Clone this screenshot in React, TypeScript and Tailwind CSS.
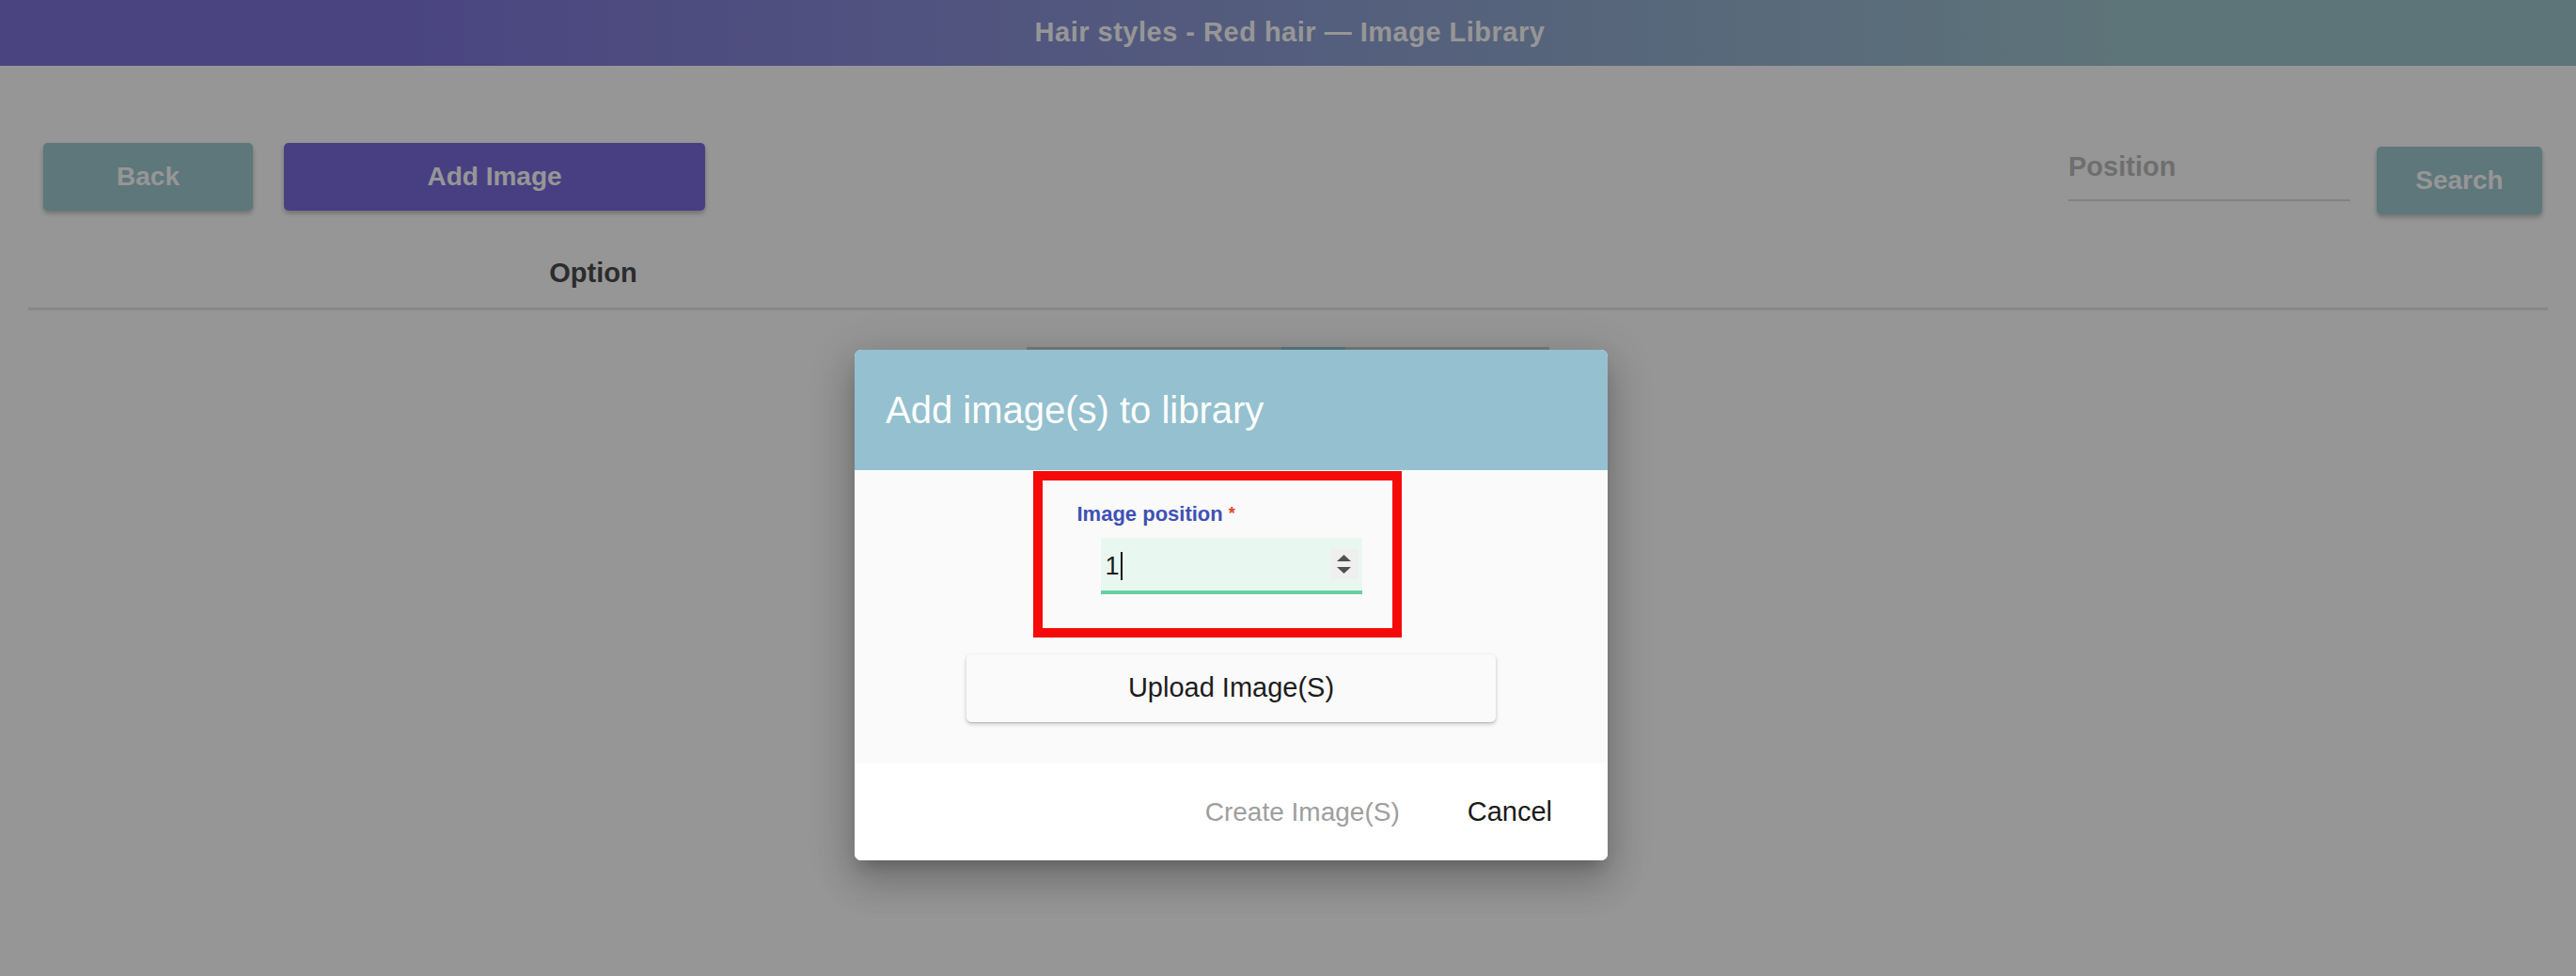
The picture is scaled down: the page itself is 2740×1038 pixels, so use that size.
import React from "react";

function Spinner() {
  return (
    <div className="flex h-[32px] w-[30px] flex-col items-center justify-center gap-[6px] bg-[#efefef]">
      <svg width="15" height="7" viewBox="0 0 15 7">
        <polygon points="7.5,0 15,7 0,7" fill="#505050" />
      </svg>
      <svg width="15" height="7" viewBox="0 0 15 7">
        <polygon points="0,0 15,0 7.5,7" fill="#505050" />
      </svg>
    </div>
  );
}

export default function App() {
  return (
    <div className="relative h-[1038px] w-full overflow-hidden bg-white font-['Liberation_Sans',Arial,sans-serif]">
      {/* Page */}
      <header className="flex h-[70px] items-center justify-center bg-[linear-gradient(90deg,#7f75dc_15%,#9fc8cd_85%)]">
        <h1 className="pl-[4px] text-[29px] font-bold tracking-[0.5px] text-white">
          Hair styles - Red hair — Image Library
        </h1>
      </header>

      <div className="flex items-start justify-between pl-[46px] pr-[36px] pt-[82px]">
        <div className="flex gap-[33px]">
          <button className="h-[72px] w-[223px] rounded-[5px] bg-[#9fcad2] text-[28px] font-bold text-white shadow-[0_3px_5px_rgba(0,0,0,0.25)]">
            Back
          </button>
          <button className="h-[72px] w-[448px] rounded-[5px] bg-[#7a6bde] text-[28px] font-bold text-white shadow-[0_3px_5px_rgba(0,0,0,0.25)]">
            Add Image
          </button>
        </div>
        <div className="flex items-start gap-[28px]">
          <div className="flex w-[300px] flex-col pt-[4px]">
            <span className="h-[42px] text-[29px] font-bold leading-[42px] text-[#bcbcbc]">Position</span>
            <div className="mt-[14px] h-[2px] bg-[#dedede]" />
          </div>
          <button className="mt-[4px] h-[72px] w-[176px] rounded-[5px] bg-[#9fcad2] text-[28px] font-bold text-white shadow-[0_3px_5px_rgba(0,0,0,0.25)]">
            Search
          </button>
        </div>
      </div>

      <div className="mx-[30px] mt-[45px]">
        <div className="flex h-[54px] items-start">
          <div className="w-[1202px] text-center text-[29px] font-bold leading-[34px] text-[#4b4b4b]">Option</div>
        </div>
        <div className="h-[3px] bg-[#e6e6e6]" />
        <div className="mt-[39px] flex justify-center">
          <div className="flex h-[10px] w-[556px] bg-[#d0d0d0]">
            <div className="ml-[271px] w-[68px] bg-[#98cbd9]" />
          </div>
        </div>
      </div>

      {/* Backdrop */}
      <div className="absolute inset-0 bg-black/[0.41]" />

      {/* Dialog */}
      <div className="absolute left-[909px] top-[372px] flex w-[801px] flex-col overflow-hidden rounded-[7px] bg-white shadow-[0_11px_15px_-7px_rgba(0,0,0,0.2),0_24px_38px_3px_rgba(0,0,0,0.14),0_9px_46px_8px_rgba(0,0,0,0.12)]">
        <div className="flex h-[128px] items-center bg-[#94c0cf] pl-[33px]">
          <h2 className="text-[40px] font-normal text-white">Add image(s) to library</h2>
        </div>
        <div className="flex h-[312px] flex-col items-center bg-[#fafafa]">
          <div className="flex w-[278px] flex-col pt-[33px]">
            <label className="ml-[-25px] flex h-[26px] items-center text-[22px] font-bold text-[#3f51b5]">
              Image position
              <span className="ml-[6px] self-start text-[18px] text-[#d84a2b]">*</span>
            </label>
            <div className="mt-[13px] flex h-[60px] items-center justify-between border-b-[4px] border-[#68d0a0] bg-[#e8f8f1] pl-[5px] pr-[4px]">
              <span className="flex items-center pt-[4px] text-[27px] text-[#1a1a1a]">
                1<span className="ml-[1px] inline-block h-[30px] w-[2px] bg-[#111]" />
              </span>
              <Spinner />
            </div>
          </div>
          <button className="mt-[64px] h-[72px] w-[563px] rounded-[5px] bg-[#fafafa] text-[29px] text-[#1c1c1c] shadow-[0_2px_4px_rgba(0,0,0,0.22),0_1px_1px_rgba(0,0,0,0.1)]">
            Upload Image(S)
          </button>
        </div>
        <div className="flex h-[103px] items-center justify-end gap-[72px] bg-white pr-[59px]">
          <span className="text-[28px] text-[#9e9e9e]">Create Image(S)</span>
          <span className="text-[29px] text-[#1a1a1a]">Cancel</span>
        </div>
      </div>

      {/* Annotation */}
      <div className="pointer-events-none absolute left-[1099px] top-[501px] h-[177px] w-[392px] border-[10px] border-[#f50a0a]" />
    </div>
  );
}
